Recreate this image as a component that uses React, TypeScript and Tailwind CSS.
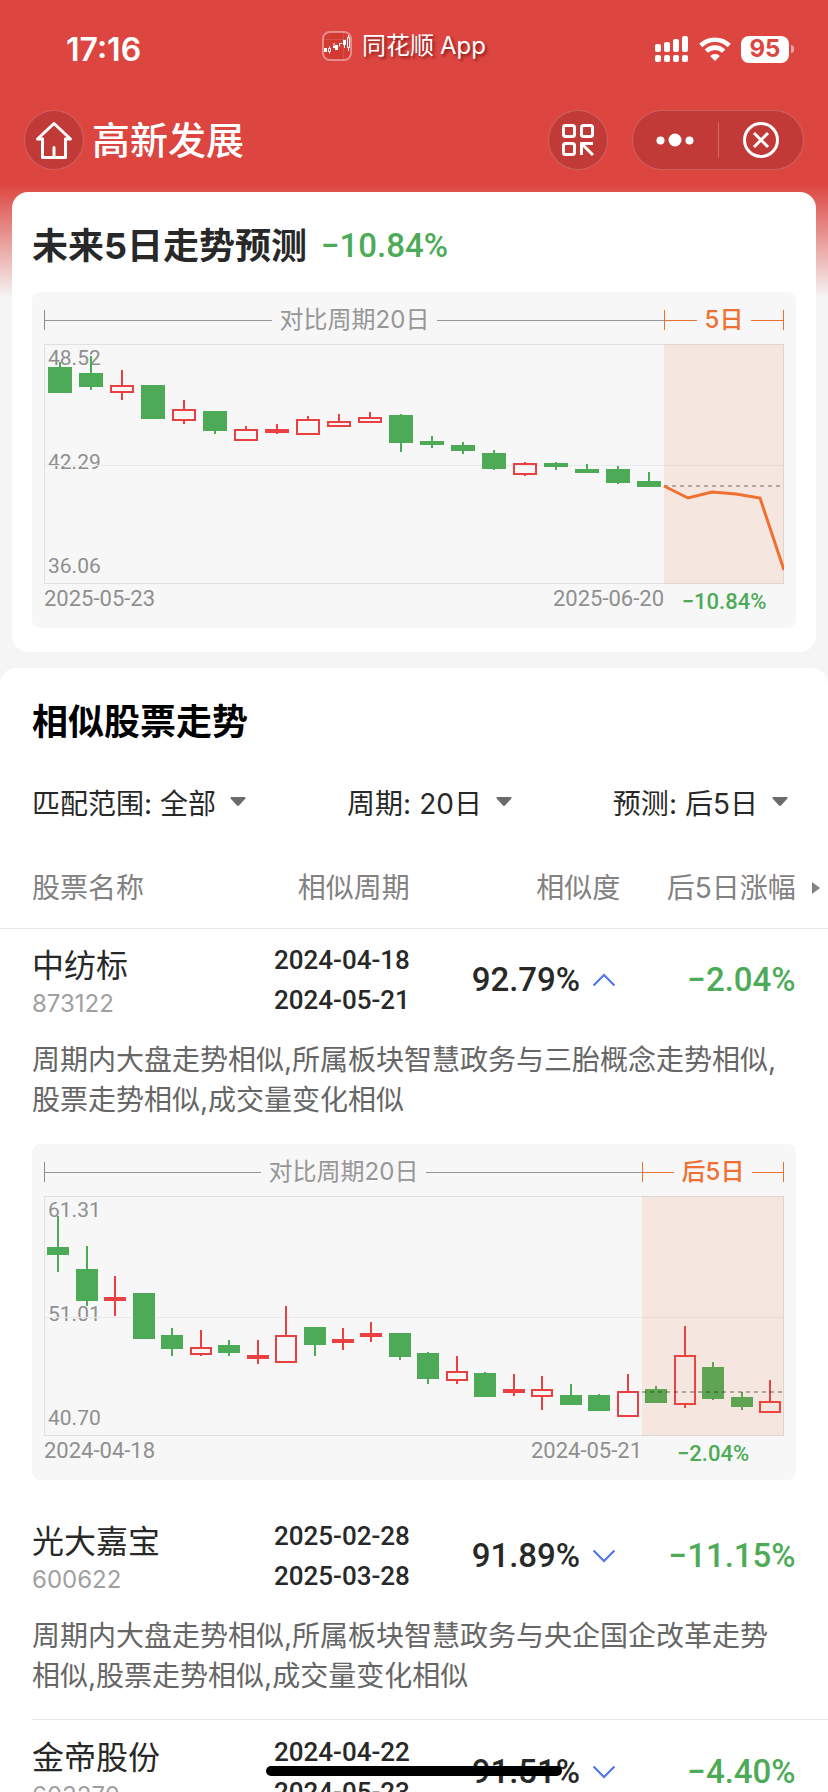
import { useState } from "react";
import type { ReactNode } from "react";

type Candle = { up: boolean; high: number; top: number; bottom: number; low: number };

const c = (kind: "r" | "g", high: number, top: number, bottom: number, low: number): Candle => ({
  up: kind === "r",
  high,
  top,
  bottom,
  low,
});

type ChartData = {
  label: string;
  compareSlots: number;
  compareWidth: number;
  bodyWidth: number;
  axis: string[];
  from: string;
  to: string;
  change: string;
  baseline: number;
  candles: Candle[];
  forecast?: string;
};

const PLOT_WIDTH = 740;

const forecastChart: ChartData = {
  label: "5日",
  compareSlots: 20,
  compareWidth: 620,
  bodyWidth: 24,
  axis: ["48.52", "42.29", "36.06"],
  from: "2025-05-23",
  to: "2025-06-20",
  change: "−10.84%",
  baseline: 142,
  candles: [
    c("g", 18, 23, 49, 49),
    c("g", 12, 29, 43, 46),
    c("r", 26, 41, 49, 56),
    c("g", 41, 41, 75, 75),
    c("r", 56, 65, 77, 80),
    c("g", 67, 67, 87, 90),
    c("r", 82, 85, 97, 97),
    c("r", 80, 85, 89, 90),
    c("r", 72, 75, 91, 91),
    c("r", 70, 77, 83, 83),
    c("r", 68, 73, 79, 79),
    c("g", 70, 71, 99, 108),
    c("g", 92, 97, 101, 104),
    c("g", 98, 101, 107, 110),
    c("g", 106, 109, 125, 126),
    c("r", 118, 119, 131, 132),
    c("g", 118, 119, 123, 126),
    c("g", 120, 125, 129, 129),
    c("g", 122, 125, 139, 140),
    c("g", 128, 137, 143, 143),
  ],
  forecast: "620,142 644,154 668,148 692,150 716,154 740,226",
};

const matchChart: ChartData = {
  label: "后5日",
  compareSlots: 21,
  compareWidth: 598,
  bodyWidth: 22,
  axis: ["61.31", "51.01", "40.70"],
  from: "2024-04-18",
  to: "2024-05-21",
  change: "−2.04%",
  baseline: 196,
  candles: [
    c("g", 20, 51, 59, 76),
    c("g", 50, 73, 105, 110),
    c("r", 80, 101, 105, 120),
    c("g", 97, 97, 143, 143),
    c("g", 132, 139, 153, 160),
    c("r", 134, 151, 159, 160),
    c("g", 144, 149, 157, 160),
    c("r", 144, 159, 163, 168),
    c("r", 110, 139, 167, 167),
    c("g", 131, 131, 149, 160),
    c("r", 132, 143, 147, 154),
    c("r", 126, 137, 141, 146),
    c("g", 137, 137, 161, 164),
    c("g", 156, 157, 183, 188),
    c("r", 160, 175, 185, 188),
    c("g", 176, 177, 201, 201),
    c("r", 178, 193, 197, 200),
    c("r", 180, 193, 201, 214),
    c("g", 188, 199, 209, 209),
    c("g", 198, 199, 215, 215),
    c("r", 178, 195, 221, 221),
    c("g", 190, 193, 207, 207),
    c("r", 130, 159, 209, 212),
    c("g", 166, 171, 203, 204),
    c("g", 196, 201, 211, 214),
    c("r", 184, 205, 217, 217),
  ],
};

type Stock = {
  name: string;
  code: string;
  from: string;
  to: string;
  similarity: string;
  change: string;
  note?: string;
  chart?: ChartData;
};

const stocks: Stock[] = [
  {
    name: "中纺标",
    code: "873122",
    from: "2024-04-18",
    to: "2024-05-21",
    similarity: "92.79%",
    change: "−2.04%",
    note: "周期内大盘走势相似,所属板块智慧政务与三胎概念走势相似,股票走势相似,成交量变化相似",
    chart: matchChart,
  },
  {
    name: "光大嘉宝",
    code: "600622",
    from: "2025-02-28",
    to: "2025-03-28",
    similarity: "91.89%",
    change: "−11.15%",
    note: "周期内大盘走势相似,所属板块智慧政务与央企国企改革走势相似,股票走势相似,成交量变化相似",
  },
  {
    name: "金帝股份",
    code: "603270",
    from: "2024-04-22",
    to: "2024-05-23",
    similarity: "91.51%",
    change: "−4.40%",
  },
];

function CandleMark({ candle, x, width }: { candle: Candle; x: number; width: number }) {
  const color = candle.up ? "#ea4042" : "#4dab58";
  const hollow = candle.up && candle.bottom - candle.top > 4;
  return (
    <g stroke={color} strokeWidth={2}>
      {candle.high < candle.top && <line x1={x} x2={x} y1={candle.high} y2={candle.top} />}
      {candle.low > candle.bottom && <line x1={x} x2={x} y1={candle.bottom} y2={candle.low} />}
      {hollow ? (
        <rect
          x={x - width / 2 + 1}
          y={candle.top + 1}
          width={width - 2}
          height={candle.bottom - candle.top - 2}
          fill="none"
        />
      ) : (
        <rect
          x={x - width / 2}
          y={candle.top}
          width={width}
          height={candle.bottom - candle.top}
          fill={color}
          stroke="none"
        />
      )}
    </g>
  );
}

function Span({ share, orange, children }: { share: string; orange?: boolean; children: ReactNode }) {
  return (
    <div
      className={
        orange
          ? "flex items-center border-x border-[#ee7032] text-[#ee7032]"
          : "flex items-center border-l border-[#8c8c8c] text-[#969696]"
      }
      style={{ width: share }}
    >
      <span className="h-px flex-1 bg-current" />
      <span className={orange ? "px-2 text-2xl leading-5 font-medium" : "px-2 text-2xl leading-5"}>{children}</span>
      <span className="h-px flex-1 bg-current" />
    </div>
  );
}

function KLineChart({ data }: { data: ChartData }) {
  const pitch = data.compareWidth / data.compareSlots;
  const rest = PLOT_WIDTH - data.compareWidth;
  const compareShare = `${(data.compareWidth / PLOT_WIDTH) * 100}%`;
  const restShare = `${(rest / PLOT_WIDTH) * 100}%`;
  return (
    <div className="rounded-lg bg-[#f7f7f7] px-3 pt-[18px]">
      <div className="mb-3.5 flex h-5">
        <Span share={compareShare}>对比周期20日</Span>
        <Span share={restShare} orange>
          {data.label}
        </Span>
      </div>
      <div className="relative h-60">
        <div className="absolute top-0 bottom-1 left-1 flex flex-col justify-between font-['Roboto',sans-serif] text-[21px] leading-7 text-[#8f8f8f]">
          {data.axis.map((value) => (
            <span key={value}>{value}</span>
          ))}
        </div>
        <svg
          viewBox="0 0 740 240"
          preserveAspectRatio="none"
          className="relative block h-full w-full"
          role="img"
          aria-label="K线走势"
        >
          <line x1="0" x2="740" y1="121.5" y2="121.5" stroke="#e9e9e9" />
          <rect x="0.5" y="0.5" width="739" height="239" fill="none" stroke="#e1e1e1" />
          {data.candles.map((candle, i) => (
            <CandleMark key={i} candle={candle} x={Math.round(pitch * (i + 0.5))} width={data.bodyWidth} />
          ))}
          <rect x={data.compareWidth} y="0" width={rest} height="240" fill="#ee6f2d" fillOpacity="0.11" />
          <line
            x1={data.compareWidth}
            x2="740"
            y1={data.baseline}
            y2={data.baseline}
            stroke="#000"
            strokeOpacity="0.28"
            strokeWidth="2"
            strokeDasharray="4 4"
          />
          {data.forecast && <polyline points={data.forecast} fill="none" stroke="#f07030" strokeWidth="3" />}
        </svg>
      </div>
      <div className="flex h-11 font-['Roboto',sans-serif] text-[22px]">
        <div className="flex justify-between leading-[30px] text-[#8f8f8f]" style={{ width: compareShare }}>
          <span>{data.from}</span>
          <span>{data.to}</span>
        </div>
        <div
          className="text-center leading-9 font-medium whitespace-nowrap text-[#4dab58]"
          style={{ width: restShare }}
        >
          {data.change}
        </div>
      </div>
    </div>
  );
}

function StatusBar() {
  return (
    <div className="flex h-[98px] items-center justify-between pr-[34px] pl-[66px]">
      <span className="pt-0.5 text-[32px] font-semibold">17:16</span>
      <div className="mb-1.5 ml-3 flex items-center gap-2.5">
        <svg width="30" height="30" viewBox="0 0 30 30" fill="none" aria-hidden="true">
          <rect x="1" y="1" width="28" height="28" rx="7" fill="#d43a34" stroke="#fff" strokeOpacity="0.4" strokeWidth="2" />
          <path d="M1 8.5h28M21.5 1v28" stroke="#fff" strokeOpacity="0.12" />
          <path d="M2 17h3v4H2zM11 15h2v2h-2zM13 14h3v5h-3zM21 9h3v5h-3z" fill="#fff" />
          <path d="M6.500 17.500h2v3h-2zM7.500 15.500v2M7.500 20.500v2M12 12v4M17.500 12.500v3M17 12.500h3M25.500 6.500h2v10h-2zM22.500 14v3M26.500 4v2M26.500 17v3" stroke="#fff" />
        </svg>
        <span className="text-2xl leading-8 [text-shadow:2px_2px_3px_rgba(80,0,0,0.6)]">
          同花顺<span className="ml-1.5">App</span>
        </span>
      </div>
      <div className="flex items-center gap-2.5">
        <svg width="34" height="26" viewBox="0 0 34 26" fill="#fff" aria-label="信号">
          <rect x="0" y="8" width="6" height="8" rx="2" />
          <rect x="9" y="6" width="6" height="10" rx="2" />
          <rect x="18" y="3" width="6" height="13" rx="2" />
          <rect x="27" y="0" width="6" height="16" rx="2" />
          <rect x="0" y="19" width="6" height="7" rx="2" />
          <rect x="9" y="19" width="6" height="7" rx="2" />
          <rect x="18" y="19" width="6" height="7" rx="2" />
          <rect x="27" y="19" width="6" height="7" rx="2" />
        </svg>
        <svg width="32" height="26" viewBox="0 0 32 26" aria-label="Wi-Fi">
          <g fill="none" stroke="#fff" strokeWidth="4.600">
            <path d="M1.800 9.500a20.300 20.300 0 0 1 28.400 0" />
            <path d="M7.300 15.200a12.400 12.400 0 0 1 17.400 0" />
          </g>
          <path d="M16 25l-4.900-5a7 7 0 0 1 9.800 0z" fill="#fff" />
        </svg>
        <div className="flex items-center">
          <span className="flex h-[27px] w-12 items-center justify-center rounded-lg bg-white text-2xl font-bold text-[#dd4540]">
            95
          </span>
          <span className="ml-0.5 h-2 w-[3px] rounded-r-full bg-white/50" />
        </div>
      </div>
    </div>
  );
}

function NavBar() {
  return (
    <div className="flex h-[60px] items-center px-6">
      <button
        type="button"
        aria-label="首页"
        className="flex size-[60px] items-center justify-center rounded-full border border-white/20 bg-[#c13a37]"
      >
        <svg width="38" height="40" viewBox="0 0 38 40" fill="none" stroke="#fff" strokeWidth="3" strokeLinecap="round" strokeLinejoin="round">
          <path d="M7.500 19H2.500L19 3.500L35.500 19H30.500" />
          <path d="M7.500 19v18.500h23V19M19 27.500v9" />
        </svg>
      </button>
      <h1 className="ml-2 flex-1 text-[38px] leading-[60px] font-medium">高新发展</h1>
      <button
        type="button"
        aria-label="扫码"
        className="flex size-[60px] items-center justify-center rounded-full border border-white/20 bg-[#c13a37]"
      >
        <svg width="32" height="32" viewBox="0 0 32 32" fill="none" stroke="#fff" strokeWidth="3">
          <rect x="1.500" y="1.500" width="11" height="11" rx="2" />
          <rect x="19.500" y="1.500" width="11" height="11" rx="2" />
          <rect x="1.500" y="19.500" width="11" height="11" rx="2" />
          <path d="M19.500 31V19.500H31M20.500 20.500L31 31" />
        </svg>
      </button>
      <div className="ml-6 flex h-[60px] w-[172px] items-center rounded-full border border-white/20 bg-[#c13a37]">
        <button type="button" aria-label="更多" className="flex flex-1 justify-center">
          <svg width="38" height="14" viewBox="0 0 38 14" fill="#fff">
            <circle cx="4.500" cy="7.500" r="4" />
            <circle cx="19" cy="7" r="6.500" />
            <circle cx="33.500" cy="7.500" r="4" />
          </svg>
        </button>
        <span className="h-9 w-px bg-white/25" />
        <button type="button" aria-label="关闭" className="flex flex-1 justify-center">
          <svg width="36" height="36" viewBox="0 0 36 36" fill="none" stroke="#fff" strokeWidth="3">
            <circle cx="18" cy="18" r="16.500" />
            <path d="M11 11l14 14M25 11L11 25" />
          </svg>
        </button>
      </div>
    </div>
  );
}

function Filter({ id, label, options }: { id: string; label: string; options: string[] }) {
  return (
    <div className="flex items-center text-[28px] leading-10 text-[#282828]">
      <label htmlFor={id} className="mr-2">
        {label}:
      </label>
      <select id={id} className="appearance-none bg-transparent [field-sizing:content]">
        {options.map((option) => (
          <option key={option}>{option}</option>
        ))}
      </select>
      <svg width="16" height="10" viewBox="0 0 16 10" className="mb-1 ml-3.5 fill-[#6b6b6b]" aria-hidden="true">
        <path d="M1.500 0h13q1.600.3.700 1.700L9 8.600q-1 .8-2 0L.8 1.700Q-.1.300 1.500 0z" />
      </svg>
    </div>
  );
}

function StockRows({ stock, open, onToggle }: { stock: Stock; open: boolean; onToggle: () => void }) {
  return (
    <tbody>
      <tr className="h-[104px]">
        <td className="pt-2 pl-8">
          <div className="text-[32px] leading-10 text-[#282828]">{stock.name}</div>
          <div className="text-2xl leading-9 text-[#a0a0a0]">{stock.code}</div>
        </td>
        <td className="text-right font-['Roboto',sans-serif] text-[26px] leading-10 font-medium text-[#282828]">
          <div>{stock.from}</div>
          <div>{stock.to}</div>
        </td>
        <td>
          <div className="flex items-center justify-end gap-3 pr-1 font-['Roboto',sans-serif] text-[33px] leading-10 font-medium text-[#282828]">
            {stock.similarity}
            <button type="button" aria-label={open ? "收起" : "展开"} aria-expanded={open} onClick={onToggle}>
              <svg
                width="24"
                height="14"
                viewBox="0 0 24 14"
                fill="none"
                stroke="#4a74f5"
                strokeWidth="2"
                className={open ? "" : "rotate-180"}
              >
                <path d="M1.500 12.500L12 2l10.500 10.500" />
              </svg>
            </button>
          </div>
        </td>
        <td className="text-right font-['Roboto',sans-serif] text-[33px] leading-10 font-medium text-[#4dab58]">
          {stock.change}
        </td>
        <td />
      </tr>
      {stock.note && (
        <tr>
          <td colSpan={5}>
            <div className={open ? "ml-8 pt-2 pb-6" : "ml-8 border-b border-[#e9e9e9] pt-2 pb-[23px]"}>
              <p className="pr-9 text-[28px] leading-10 break-all text-[#666]">{stock.note}</p>
              {open && stock.chart && (
                <div className="mt-6 mr-8">
                  <KLineChart data={stock.chart} />
                </div>
              )}
            </div>
          </td>
        </tr>
      )}
    </tbody>
  );
}

export default function App() {
  const [openCode, setOpenCode] = useState("873122");
  return (
    <div className="h-screen overflow-y-auto bg-[#f5f5f5] font-['Inter','Noto_Sans_CJK_SC',sans-serif] [scrollbar-width:none]">
      <div className="bg-[linear-gradient(to_bottom,#dd4540_184px,#f5f5f5_298px)]">
        <header className="pb-[22px] text-white">
          <StatusBar />
          <div className="pt-3">
            <NavBar />
          </div>
        </header>

        <section className="mx-3 rounded-2xl bg-white px-5 pb-6">
          <div className="flex h-[100px] items-center gap-3.5 pt-2">
            <h2 className="text-4xl leading-[60px] font-bold text-[#282828]">未来5日走势预测</h2>
            <span className="font-['Roboto',sans-serif] text-[33px] leading-[60px] font-medium text-[#4dab58]">
              −10.84%
            </span>
          </div>
          <KLineChart data={forecastChart} />
        </section>

        <section className="mt-4 rounded-t-2xl bg-white">
          <h2 className="px-8 pt-6 text-4xl leading-[60px] font-bold text-black">相似股票走势</h2>
          <div className="flex justify-between pt-8 pr-10 pl-8">
            <Filter id="scope" label="匹配范围" options={["全部", "同行业"]} />
            <Filter id="period" label="周期" options={["20日", "30日"]} />
            <Filter id="forecast" label="预测" options={["后5日", "后10日"]} />
          </div>
          <table className="mt-6 w-full table-fixed border-collapse">
            <colgroup>
              <col className="w-[28%]" />
              <col className="w-[21.5%]" />
              <col className="w-[25.4%]" />
              <col className="w-[21.2%]" />
              <col />
            </colgroup>
            <thead>
              <tr className="h-20 border-b border-[#e9e9e9] text-[28px] leading-10 text-[#828282]">
                <th className="pl-8 text-left font-normal">股票名称</th>
                <th className="text-right font-normal">相似周期</th>
                <th className="text-right font-normal">相似度</th>
                <th className="text-right font-normal">后5日涨幅</th>
                <th>
                  <svg width="8" height="12" viewBox="0 0 8 12" className="ml-4 fill-[#828282]" aria-label="更多列">
                    <path d="M0 0l8 6-8 6z" />
                  </svg>
                </th>
              </tr>
            </thead>
            {stocks.map((stock) => (
              <StockRows
                key={stock.code}
                stock={stock}
                open={openCode === stock.code}
                onToggle={() => setOpenCode(openCode === stock.code ? "" : stock.code)}
              />
            ))}
          </table>
        </section>
      </div>
      <div className="fixed bottom-4 left-1/2 h-2.5 w-[296px] -translate-x-1/2 rounded-full bg-black" />
    </div>
  );
}
